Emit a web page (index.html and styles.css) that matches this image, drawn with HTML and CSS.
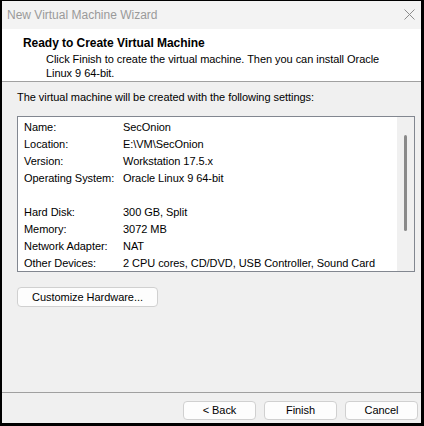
FILE: index.html
```
<!DOCTYPE html>
<html>
<head>
<meta charset="utf-8">
<link rel="stylesheet" href="styles.css">
</head>
<body>
<div class="window">
  <div class="titlebar">
    <span class="title">New Virtual Machine Wizard</span>
    <svg class="close" width="11" height="11" viewBox="0 0 11 11"><path d="M0.5 0.5L10.5 10.5M10.5 0.5L0.5 10.5" stroke="#8c8c8c" stroke-width="1" fill="none"/></svg>
  </div>
  <div class="header">
    <div class="h-title">Ready to Create Virtual Machine</div>
    <div class="h-sub">Click Finish to create the virtual machine. Then you can install Oracle<br>Linux 9 64-bit.</div>
  </div>
  <div class="content">
    <div class="intro">The virtual machine will be created with the following settings:</div>
    <div class="listbox">
      <div class="list">
        <span>Name:</span><span>SecOnion</span>
        <span>Location:</span><span>E:\VM\SecOnion</span>
        <span>Version:</span><span>Workstation 17.5.x</span>
        <span>Operating System:</span><span>Oracle Linux 9 64-bit</span>
        <span>&nbsp;</span><span>&nbsp;</span>
        <span>Hard Disk:</span><span>300 GB, Split</span>
        <span>Memory:</span><span>3072 MB</span>
        <span>Network Adapter:</span><span>NAT</span>
        <span>Other Devices:</span><span>2 CPU cores, CD/DVD, USB Controller, Sound Card</span>
      </div>
      <div class="vscroll"><div class="thumb"></div></div>
    </div>
    <button class="btn custom">Customize Hardware...</button>
  </div>
  <div class="footer">
    <button class="btn nav">&lt; Back</button>
    <button class="btn nav">Finish</button>
    <button class="btn nav">Cancel</button>
  </div>
</div>
</body>
</html>
```
FILE: styles.css
```
* { box-sizing: border-box; }
html, body { margin: 0; padding: 0; }
body { width: 424px; height: 426px; overflow: hidden; background: #000; font-family: "Liberation Sans", Arial, sans-serif; font-size: 11px; letter-spacing: -0.05px; color: #000; }
.window { width: 424px; height: 426px; border-style: solid; border-color: #000; border-width: 1px 3px 3px 2px; background: #f0f0f0; display: flex; flex-direction: column; }
.titlebar { height: 28px; background: #f3f3f3; display: flex; align-items: center; justify-content: space-between; padding: 0 6px 0 5px; }
.title { color: #9a9a9a; font-size: 12px; letter-spacing: 0; line-height: 16px; }
.close { display: block; margin-top: -2px; }
.header { height: 53px; background: #fff; border-bottom: 1px solid #a0a0a0; padding: 6px 0 0 21px; }
.h-title { font-weight: bold; font-size: 12px; letter-spacing: -0.05px; line-height: 16px; white-space: nowrap; }
.h-sub { padding-left: 23px; margin-top: 1px; line-height: 14px; white-space: nowrap; }
.content { flex: 1; padding: 8px 6px 0 15px; display: flex; flex-direction: column; align-items: flex-start; }
.intro { line-height: 15px; white-space: nowrap; }
.listbox { margin-top: 11px; width: 398px; height: 156px; border: 1px solid #828790; background: #fff; display: flex; overflow: hidden; }
.list { flex: 1; padding: 2px 0 0 6px; display: grid; grid-template-columns: 99px auto; grid-auto-rows: 17px; line-height: 17px; white-space: nowrap; align-content: start; overflow: hidden; }
.vscroll { width: 17px; background: #f0f0f0; padding: 18px 0 0 7px; }
.thumb { width: 3px; height: 96px; background: #8a8a8a; border-radius: 2px; }
.btn { font-family: inherit; font-size: 11px; letter-spacing: -0.05px; color: #000; background: #fdfdfd; border: 1px solid #d0d0d0; border-radius: 4px; padding: 0; line-height: 17px; }
.custom { margin-top: 15px; width: 141px; height: 20px; }
.footer { height: 31px; border-top: 1px solid #a0a0a0; display: flex; justify-content: flex-end; gap: 8px; padding: 8px 3px 0 0; }
.nav { width: 73px; height: 19px; }
```
